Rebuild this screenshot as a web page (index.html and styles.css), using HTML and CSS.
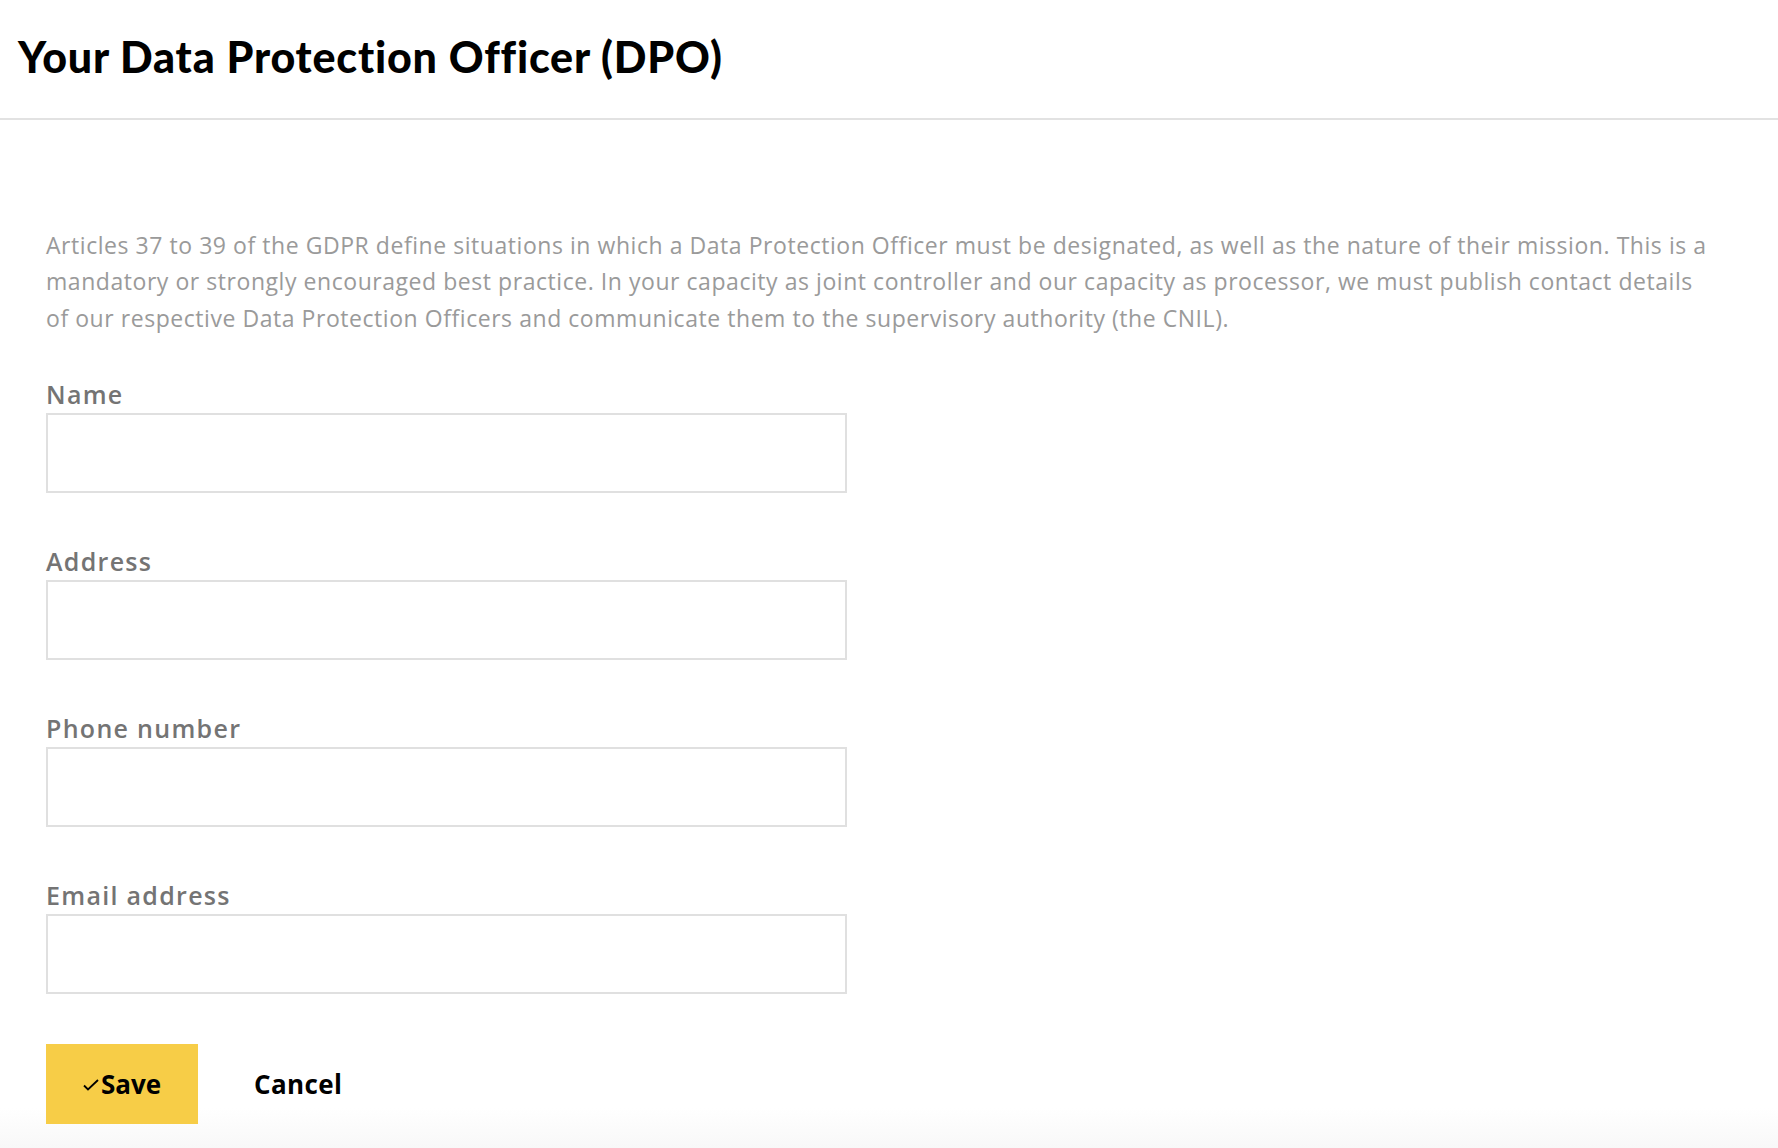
FILE: index.html
```html
<!DOCTYPE html>
<html lang="en">
<head>
<meta charset="utf-8">
<title>Your Data Protection Officer (DPO)</title>
<link rel="stylesheet" href="styles.css">
</head>
<body>
<header class="page-header">
  <h1 class="page-title">Your Data Protection Officer (DPO)</h1>
</header>
<main class="content">
  <p class="intro">Articles 37 to 39 of the GDPR define situations in which a Data Protection Officer must be designated, as well as the nature of their mission. This is a mandatory or strongly encouraged best practice. In your capacity as joint controller and our capacity as processor, we must publish contact details of our respective Data Protection Officers and communicate them to the supervisory authority (the CNIL).</p>
  <form class="dpo-form">
    <div class="field">
      <label class="field-label" for="name">Name</label>
      <input class="field-input" id="name" type="text">
    </div>
    <div class="field">
      <label class="field-label" for="address">Address</label>
      <input class="field-input" id="address" type="text">
    </div>
    <div class="field">
      <label class="field-label" for="phone">Phone number</label>
      <input class="field-input" id="phone" type="text">
    </div>
    <div class="field">
      <label class="field-label" for="email">Email address</label>
      <input class="field-input" id="email" type="text">
    </div>
    <div class="actions">
      <button class="btn btn-save" type="button"><svg class="check" viewBox="0 0 16 12" width="16" height="12"><path d="M1 6.5 L5 10.5 L15 1" fill="none" stroke="#000" stroke-width="1.8"/></svg>Save</button>
      <button class="btn btn-cancel" type="button">Cancel</button>
    </div>
  </form>
</main>
</body>
</html>
```
FILE: styles.css
```css
html {
  background: #fff;
}
body {
  margin: 0;
  min-height: 100vh;
  background: linear-gradient(to bottom, #ffffff 0, #ffffff calc(100% - 40px), #f8f8f8 100%);
  font-family: "Open Sans", "Liberation Sans", sans-serif;
  color: #000;
}
.page-header {
  height: 118px;
  border-bottom: 2px solid #e2e2e2;
  padding-left: 18px;
  display: flex;
  align-items: flex-start;
}
.page-title {
  margin: 0;
  padding-top: 27px;
  font-family: "Lato", "Liberation Sans", sans-serif;
  font-weight: 900;
  font-size: 43px;
  line-height: 60px;
  letter-spacing: 0.8px;
}
.content {
  padding: 0 46px;
}
.intro {
  margin: 0;
  max-width: 1668px;
  padding-top: 107px;
  font-size: 23px;
  line-height: 36.3px;
  letter-spacing: 0.55px;
  color: #9a9a9a;
}
.dpo-form {
  display: flex;
  flex-direction: column;
  padding-top: 39px;
}
.field {
  display: flex;
  flex-direction: column;
  margin-bottom: 49px;
}
.field-label {
  font-size: 25px;
  font-weight: 600;
  color: #747474;
  letter-spacing: 1.3px;
  line-height: 38px;
}
.field-input {
  box-sizing: border-box;
  width: 801px;
  height: 80px;
  border: 2px solid #e0e0e0;
  background: #fff;
  margin: 0;
  font-size: 22px;
  padding: 0 16px;
}
.actions {
  display: flex;
  align-items: center;
  gap: 56px;
  margin-top: 1px;
}
.btn {
  font-family: "Open Sans", "Liberation Sans", sans-serif;
  font-weight: 700;
  font-size: 26px;
  color: #000;
  border: 0;
  background: none;
  padding: 0;
  cursor: pointer;
}
.btn-save {
  width: 152px;
  height: 80px;
  background: #f7cd47;
  display: flex;
  align-items: center;
  justify-content: center;
  gap: 2px;
}
.btn-cancel {
  letter-spacing: 0.4px;
}
.check {
  margin-top: 2px;
}
```
